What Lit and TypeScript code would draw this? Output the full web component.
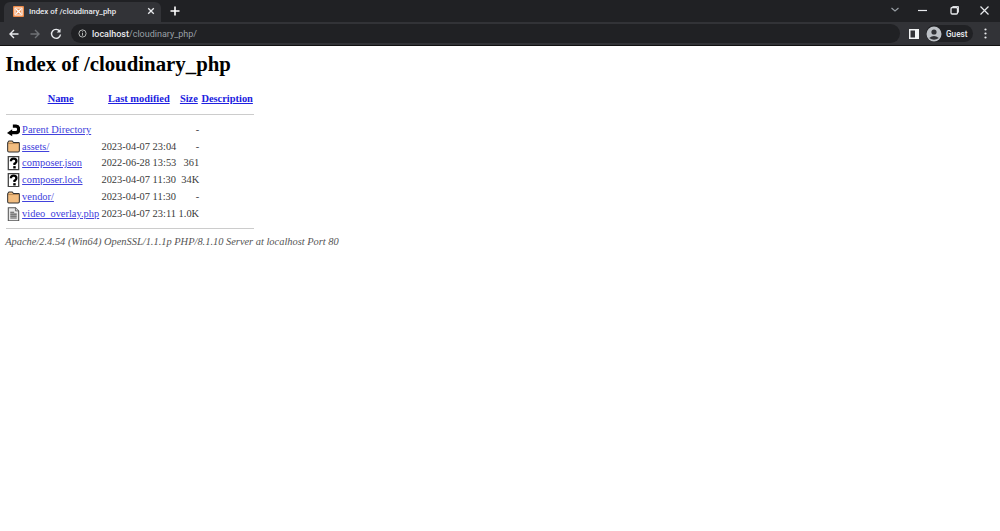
import { LitElement, html, css, svg } from "lit";
import { customElement } from "lit/decorators.js";

const folder = svg`<svg class="ic" viewBox="0 0 20 22"><path d="M1.5 5 L3 3 H8 L10 5.5 H18 Q19 5.5 19 7 V18 Q19 20 17 20 H3 Q1 20 1 18 V6Z" fill="#f2bd80" stroke="#333" stroke-width="1.6"/><path d="M1.5 7 H18.5" stroke="#9a6c3a" stroke-width="1"/></svg>`;
const unknown = svg`<svg class="ic" viewBox="0 0 20 22"><path d="M2 1 H18 V21 H2Z" fill="#fff" stroke="#444" stroke-width="2"/><path d="M6 8 Q6 4 10 4 Q14.5 4 14.5 8 Q14.5 10.5 11.5 12 V14" stroke="#000" stroke-width="3.6" fill="none"/><rect x="9.6" y="15.6" width="3.8" height="3.6" fill="#000"/></svg>`;
const back = svg`<svg class="ic" viewBox="0 0 20 22"><path d="M9 5 H14 Q18 5 18 10 Q18 15 13 15 H7" stroke="#000" stroke-width="5" fill="none"/><path d="M0 15.5 L8 9.5 V20.5Z" fill="#000"/></svg>`;
const text = svg`<svg class="ic" viewBox="0 0 20 22"><path d="M2 1 H13 L18 6 V21 H2Z" fill="#e8e8e8" stroke="#555" stroke-width="1.6"/><path d="M13 1 V6 H18" fill="#ccc" stroke="#555" stroke-width="1.2"/><path d="M5 8 H11 M5 11 H15 M5 14 H15 M5 17 H15" stroke="#555" stroke-width="1.7"/></svg>`;

const rows = [
  { icon: back, name: "Parent Directory", date: "", size: "-" },
  { icon: folder, name: "assets/", date: "2023-04-07 23:04", size: "-" },
  { icon: unknown, name: "composer.json", date: "2022-06-28 13:53", size: "361" },
  { icon: unknown, name: "composer.lock", date: "2023-04-07 11:30", size: "34K" },
  { icon: folder, name: "vendor/", date: "2023-04-07 11:30", size: "-" },
  { icon: text, name: "video_overlay.php", date: "2023-04-07 23:11", size: "1.0K" },
];

@customElement("app-root")
export class AppRoot extends LitElement {
  static styles = css`
    :host { display: block; height: 531px; background: #fff; font-family: "Liberation Serif", serif; overflow: hidden; }
    .tabs { height: 22px; background: #202124; display: flex; align-items: flex-end; }
    .tab { width: 157px; height: 20px; margin-left: 4px; background: #323337; border-radius: 6px 6px 0 0; display: flex; align-items: center; padding: 0 6px 2px 9px; box-sizing: border-box; color: #e8eaed; font: 500 7.9px "Roboto", sans-serif; gap: 5px; }
    .tab .title { flex: 1; white-space: nowrap; }
    .fav { width: 11px; height: 11px; background: #ec8a4a; border-radius: 1px; display: flex; }
    .plus { margin-left: 9px; margin-bottom: 6px; display: flex; }
    .spacer { flex: 1; }
    .win { display: flex; align-items: center; height: 22px; align-self: flex-start; }
    .win svg { width: 31px; height: 22px; display: block; }
    .bar { height: 23px; background: #323337; display: flex; align-items: center; box-sizing: border-box; }
    .nav { display: flex; width: 21px; justify-content: center; }
    .navs { display: flex; padding-left: 3px; }
    .url { width: 829px; height: 19px; margin-left: 5px; background: #202124; border-radius: 10px; display: flex; align-items: center; padding-left: 7px; box-sizing: border-box; color: #9aa0a6; font: 9px "Roboto", sans-serif; gap: 5px; }
    .url b { color: #e8eaed; font-weight: 500; }
    .right { display: flex; align-items: center; margin-left: 9px; }
    .guest { display: flex; align-items: center; gap: 4px; height: 17px; background: #202124; border-radius: 9px; padding-right: 6px; margin-left: 7px; color: #e8eaed; font: 500 8.2px "Roboto", sans-serif; }
    .dots { margin-left: 11px; display: flex; }
    .line { height: 1px; background: #111; }
    .page { padding: 0 5.2px; color: #3a3a3a; font-size: 10.42px; }
    h1 { font-size: 20.83px; line-height: 24px; margin: 0; padding-top: 6px; color: #000; }
    table { border-collapse: separate; border-spacing: 1.3px 0; margin-top: 14px; }
    th, td { padding: 0 0.65px; white-space: nowrap; line-height: 12px; }
    th { height: 17px; }
    td { height: 16.8px; }
    a { color: #4242dc; text-decoration: underline; }
    th a { color: #2020e0; }
    .ic { display: block; width: 13px; height: 14.3px; }
    .r { text-align: right; }
    hr { height: 0; border: 0; border-top: 1.5px solid #ccc; margin: 0; }
    .hr1 td { height: 14.4px; padding: 0; }
    .hr2 td { height: 13.5px; padding: 0; }
    address { font-style: italic; margin-top: 0; color: #555; line-height: 12px; }
  `;

  render() {
    return html`
      <div class="tabs">
        <div class="tab">
          <span class="fav"><svg viewBox="0 0 11 11" width="11" height="11"><path d="M2 2 H9 V9 H2Z" stroke="#fff" stroke-width="1.1" fill="none"/><path d="M3.2 3.2 L7.8 7.8 M7.8 3.2 L3.2 7.8" stroke="#fff" stroke-width="1.3"/></svg></span>
          <span class="title">Index of /cloudinary_php</span>
          <svg viewBox="0 0 8 8" width="8" height="8"><path d="M1.2 1.2 L6.8 6.8 M6.8 1.2 L1.2 6.8" stroke="#e8eaed" stroke-width="1.3"/></svg>
        </div>
        <span class="plus"><svg viewBox="0 0 10 10" width="10" height="10"><path d="M5 0.5 V9.5 M0.5 5 H9.5" stroke="#fff" stroke-width="1.6"/></svg></span>
        <span class="spacer"></span>
        <div class="win">
          <svg viewBox="0 0 31 22"><path d="M15.5 8 L19 11 L22.5 8" stroke="#9aa0a6" stroke-width="1.1" fill="none"/></svg>
          <svg viewBox="0 0 31 22"><path d="M11 10.5 H20" stroke="#e8eaed" stroke-width="1.2"/></svg>
          <svg viewBox="0 0 31 22"><rect x="13" y="7.5" width="6.5" height="6.5" rx="1.2" stroke="#e8eaed" stroke-width="1.3" fill="none"/><path d="M14.5 6.5 H20.5 V12.5" stroke="#e8eaed" stroke-width="0.9" fill="none"/></svg>
          <svg viewBox="0 0 31 22"><path d="M11.5 6.5 L19.5 14.5 M19.5 6.5 L11.5 14.5" stroke="#e8eaed" stroke-width="1.2"/></svg>
        </div>
      </div>
      <div class="bar">
        <div class="navs">
          <span class="nav"><svg viewBox="0 0 12 12" width="12" height="12"><path d="M10.5 6 H2 M6 2 L2 6 L6 10" stroke="#e8eaed" stroke-width="1.4" fill="none"/></svg></span>
          <span class="nav"><svg viewBox="0 0 12 12" width="12" height="12"><path d="M1.5 6 H10 M6 2 L10 6 L6 10" stroke="#6f7276" stroke-width="1.4" fill="none"/></svg></span>
          <span class="nav"><svg viewBox="0 0 12 12" width="12" height="12"><path d="M9.7 3.2 A4.5 4.5 0 1 0 10.5 6.5" stroke="#e8eaed" stroke-width="1.4" fill="none"/><path d="M10.5 0.8 V4.6 H6.7Z" fill="#e8eaed"/></svg></span>
        </div>
        <div class="url">
          <svg viewBox="0 0 10 10" width="9" height="9"><circle cx="5" cy="5" r="4" stroke="#c4c7c5" fill="none"/><path d="M5 4.4 V7.4 M5 2.6 V3.6" stroke="#c4c7c5"/></svg>
          <span><b>localhost</b>/cloudinary_php/</span>
        </div>
        <div class="right">
          <svg viewBox="0 0 10 10" width="10" height="10"><rect width="10" height="10" fill="#f1f3f4"/><rect x="1.5" y="1.5" width="4.5" height="7" fill="#323337"/></svg>
          <div class="guest">
            <svg viewBox="0 0 16 16" width="16" height="16"><circle cx="8" cy="8" r="7.5" fill="#bdc1c6"/><circle cx="8" cy="6" r="2.6" fill="#323337"/><path d="M3.2 12 Q8 7.8 12.8 12 Q8 15.5 3.2 12Z" fill="#323337"/></svg>
            Guest
          </div>
          <span class="dots"><svg viewBox="0 0 3 11" width="3" height="11"><circle cx="1.5" cy="1.5" r="1.1" fill="#e8eaed"/><circle cx="1.5" cy="5.5" r="1.1" fill="#e8eaed"/><circle cx="1.5" cy="9.5" r="1.1" fill="#e8eaed"/></svg></span>
        </div>
      </div>
      <div class="line"></div>
      <div class="page">
        <h1>Index of /cloudinary_php</h1>
        <table>
          <tr>
            <th></th><th><a href="#">Name</a></th><th><a href="#">Last modified</a></th><th><a href="#">Size</a></th><th><a href="#">Description</a></th>
          </tr>
          <tr class="hr1"><td colspan="5"><hr /></td></tr>
          ${rows.map(r => html`<tr>
            <td>${r.icon}</td>
            <td><a href="#">${r.name}</a></td>
            <td>${r.date}</td>
            <td class="r">${r.size}</td>
            <td></td>
          </tr>`)}
          <tr class="hr2"><td colspan="5"><hr /></td></tr>
        </table>
        <address>Apache/2.4.54 (Win64) OpenSSL/1.1.1p PHP/8.1.10 Server at localhost Port 80</address>
      </div>
    `;
  }
}
